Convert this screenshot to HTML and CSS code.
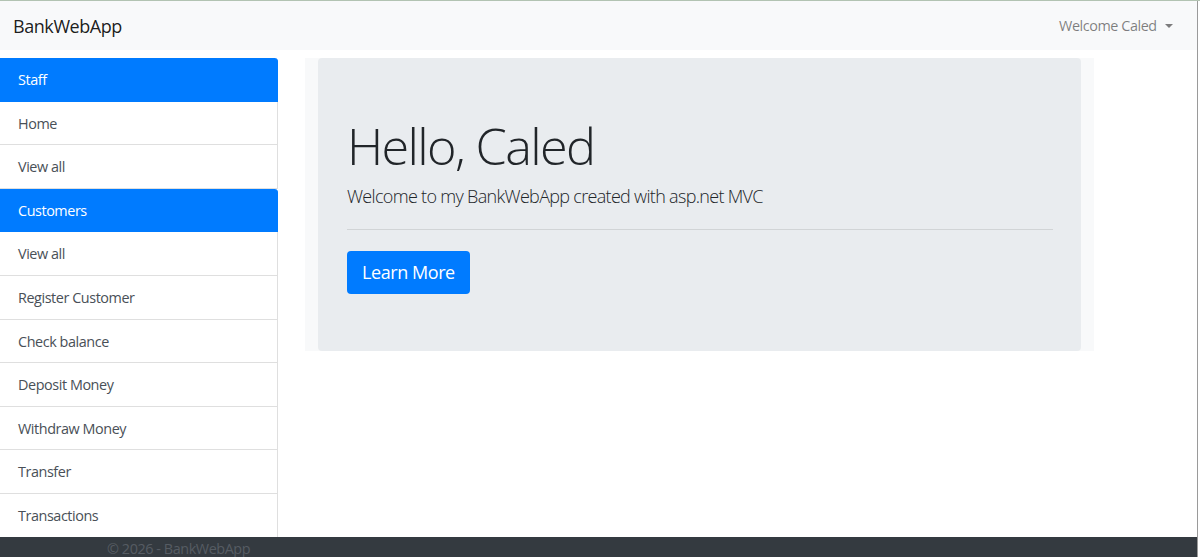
FILE: index.html
```html
<!DOCTYPE html>
<html lang="en">
<head>
    <meta charset="UTF-8">
    <meta name="viewport" content="width=device-width, initial-scale=1.0">
    <title>Home - BankWebApp</title>
    <link rel="stylesheet" href="styles.css">
</head>
<body>
    <div class="page">
        <!-- top navbar -->
        <nav class="navbar">
            <a class="brand" href="#">BankWebApp</a>
            <a class="user-menu" href="#">Welcome Caled <span class="caret"></span></a>
        </nav>

        <div class="layout">
            <!-- side menu -->
            <aside class="sidebar">
                <div class="list-group">
                    <a class="list-item active" href="#">Staff</a>
                    <a class="list-item" href="#">Home</a>
                    <a class="list-item" href="#">View all</a>
                </div>
                <div class="list-group">
                    <a class="list-item active" href="#">Customers</a>
                    <a class="list-item" href="#">View all</a>
                    <a class="list-item" href="#">Register Customer</a>
                    <a class="list-item" href="#">Check balance</a>
                    <a class="list-item" href="#">Deposit Money</a>
                    <a class="list-item" href="#">Withdraw Money</a>
                    <a class="list-item" href="#">Transfer</a>
                    <a class="list-item" href="#">Transactions</a>
                </div>
            </aside>

            <main class="content">
                <div class="col">
                    <div class="jumbotron">
                        <h1 class="display">Hello, Caled</h1>
                        <p class="lead">Welcome to my BankWebApp created with asp.net MVC</p>
                        <hr>
                        <a class="btn-primary" href="#">Learn More</a>
                    </div>
                </div>
            </main>
        </div>

        <footer class="footer">
            <span>&copy; 2026 - BankWebApp</span>
        </footer>
    </div>
</body>
</html>
```

FILE: styles.css
```css
html, body {
    margin: 0;
    padding: 0;
    background: #fff;
}
body {
    font-family: "Open Sans", "Noto Sans", sans-serif;
    font-size: 14.4px;
    letter-spacing: -0.03em;
    color: #212529;
    border-top: 1px solid #b2c3b2;
}
a {
    text-decoration: none;
}
.page {
    width: 1197px;
    height: 556px;
    border-right: 1px solid #9a9a9a;
    display: flex;
    flex-direction: column;
    overflow: hidden;
}
.navbar {
    height: 49px;
    flex-shrink: 0;
    background: #f8f9fa;
    display: flex;
    align-items: center;
    justify-content: space-between;
    padding: 0 13px;
}
.brand {
    font-size: 18px;
    color: rgba(0, 0, 0, .9);
}
.user-menu {
    color: rgba(0, 0, 0, .5);
    margin-right: 11px;
}
.caret {
    display: inline-block;
    margin-left: 5px;
    vertical-align: 3px;
    border-top: 4.5px solid;
    border-left: 4px solid transparent;
    border-right: 4px solid transparent;
}
.layout {
    flex: 1;
    display: flex;
    padding-top: 8px;
    min-height: 0;
}
.sidebar {
    width: 278px;
    flex-shrink: 0;
}
.list-group {
    display: flex;
    flex-direction: column;
}
.list-item {
    display: block;
    height: 43.6px;
    box-sizing: border-box;
    padding: 12px 18px 0;
    color: #495057;
    background: #fff;
    border: 1px solid rgba(0, 0, 0, .125);
    border-left: none;
    border-top: none;
}
.list-item.active {
    background: #007bff;
    border-color: #007bff;
    color: #fff;
    border-top-right-radius: 3.6px;
}
.content {
    flex: 1;
    padding-left: 27px;
}
.col {
    width: 763px;
    padding: 0 13px;
    background: #f8f9fa;
}
.jumbotron {
    background: #e9ecef;
    border-radius: 4px;
    padding: 58px 28px 57px 29px;
}
.display {
    margin: 0 0 8px;
    font-size: 50.4px;
    font-weight: 300;
    line-height: 1.2;
    letter-spacing: -0.033em;
}
.lead {
    margin: 0 0 21px;
    font-size: 18px;
    font-weight: 300;
    letter-spacing: -0.038em;
}
hr {
    margin: 0 0 21px;
    border: 0;
    border-top: 1px solid rgba(0, 0, 0, .1);
}
.btn-primary {
    display: inline-block;
    background: #007bff;
    color: #fff;
    font-size: 18px;
    line-height: 27px;
    padding: 8px 15px;
    border-radius: 4px;
}
.footer {
    height: 20px;
    flex-shrink: 0;
    background: #343a40;
    color: #565c63;
    padding-left: 107px;
    font-size: 14.4px;
    line-height: 20px;
    overflow: hidden;
}
.footer span {
    display: block;
    margin-top: 2px;
}
```
